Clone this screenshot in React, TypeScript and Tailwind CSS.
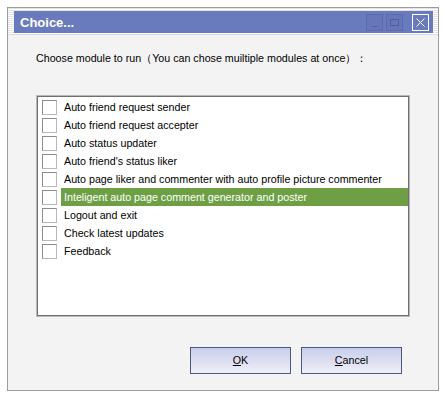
const items = [
  'Auto friend request sender',
  'Auto friend request accepter',
  'Auto status updater',
  "Auto friend's status liker",
  'Auto page liker and commenter with auto profile picture commenter',
  'Inteligent auto page comment generator and poster',
  'Logout and exit',
  'Check latest updates',
  'Feedback',
];

function TitleButton({ kind }: { kind: 'min' | 'max' | 'close' }) {
  if (kind === 'close') {
    return (
      <div className="w-[17px] h-[17px] border border-white flex items-center justify-center">
        <svg width="11" height="11" viewBox="0 0 11 11">
          <path d="M1.5 1.5 L9.5 9.5 M9.5 1.5 L1.5 9.5" stroke="#ffffff" strokeWidth="1" />
        </svg>
      </div>
    );
  }
  return (
    <div className="w-[17px] h-[17px] border border-[#5b6bb0] bg-[#6676b9] flex items-center justify-center">
      {kind === 'min' ? (
        <div className="w-[5px] h-[1px] bg-[#4f5ea3] mt-[8px]" />
      ) : (
        <div className="w-[9px] h-[7px] border border-[#4f5ea3]" />
      )}
    </div>
  );
}

export default function App() {
  return (
    <div className="w-[446px] h-[397px] bg-white pt-[7px] pl-[7px] font-['Liberation_Sans',Arial,sans-serif]">
      <div className="w-[432px] h-[384px] border border-[#9c9c9c] flex flex-col bg-[#f4f3f4]">
        <div className="pt-[3px] pl-[6px] pr-[5px] pb-[1px] bg-[repeating-linear-gradient(0deg,#ffffff_0px,#ffffff_1px,#e4e4e6_1px,#e4e4e6_2px)]">
          <div className="h-[22px] bg-[#6a7bbd] flex items-center pl-[6px] pr-[4px]">
            <span className="text-white font-bold text-[13px] leading-none">Choice...</span>
            <div className="ml-auto flex gap-[3px] items-center">
              <TitleButton kind="min" />
              <TitleButton kind="max" />
              <div className="w-[3px]" />
              <TitleButton kind="close" />
            </div>
          </div>
        </div>
        <div className="flex-1 flex flex-col pt-[17px] pl-[28px] pr-[36px] border-t border-[#dcdcdc]">
          <div className="text-[10.7px] leading-[13px] text-black">
            Choose module to run（You can chose muiltiple modules at once）：
          </div>
          <div className="mt-[30px] h-[222px] border border-[#b9b9b9] shadow-[inset_0_0_0_1px_#6f6f6f] bg-white p-[1px] pt-[2px] mr-[-8px]">
            {items.map((t, i) => (
              <div key={t} className="h-[18px] flex items-center">
                <div className="w-[23px] pl-[4px] flex items-center">
                  <div className="w-[15px] h-[15px] bg-white border border-t-[#8c8c8c] border-l-[#8c8c8c] border-r-[#b8b8b8] border-b-[#b8b8b8]" />
                </div>
                <div
                  className={
                    i === 5
                      ? 'flex-1 h-full flex items-center pl-[3px] bg-[#6e9f45] text-white text-[10.7px]'
                      : 'flex-1 h-full flex items-center pl-[3px] text-black text-[10.7px]'
                  }
                >
                  {t}
                </div>
              </div>
            ))}
          </div>
          <div className="mt-[30px] flex justify-end gap-[10px]">
            <button className="w-[101px] h-[27px] border border-[#4d5979] bg-[linear-gradient(180deg,#c9cdea,#eeeff8)] text-[10.7px] text-black">
              <span className="underline">O</span>K
            </button>
            <button className="w-[101px] h-[27px] border border-[#4d5979] bg-[linear-gradient(180deg,#c9cdea,#eeeff8)] text-[10.7px] text-black">
              <span className="underline">C</span>ancel
            </button>
          </div>
        </div>
      </div>
    </div>
  );
}
